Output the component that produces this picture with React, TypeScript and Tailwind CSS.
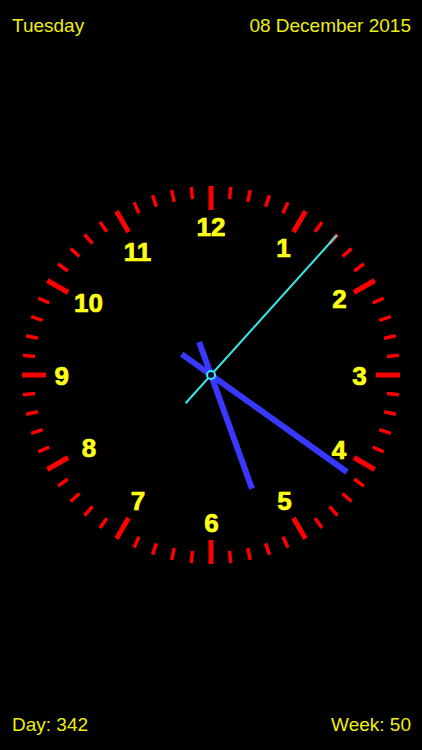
import React from "react";

const CX = 211;
const CY = 211;
const TOP = 164; // page y of svg top

// number centres measured on the page
const NUMBERS: { n: number; x: number; y: number }[] = [
  { n: 12, x: 211, y: 227 },
  { n: 1, x: 283.5, y: 247.5 },
  { n: 2, x: 339.5, y: 299 },
  { n: 3, x: 359.5, y: 376 },
  { n: 4, x: 339, y: 450 },
  { n: 5, x: 284.5, y: 501 },
  { n: 6, x: 211.5, y: 522.5 },
  { n: 7, x: 138, y: 501 },
  { n: 8, x: 89, y: 448 },
  { n: 9, x: 61.7, y: 375.8 },
  { n: 10, x: 88.5, y: 302.5 },
  { n: 11, x: 137.5, y: 251.5 },
];

function pt(angleDeg: number, r: number) {
  const a = (angleDeg * Math.PI) / 180;
  return { x: CX + r * Math.sin(a), y: CY - r * Math.cos(a) };
}

function Hand({ angle, length, tail, width, color }: { angle: number; length: number; tail: number; width: number; color: string }) {
  const tip = pt(angle, length);
  const back = pt(angle + 180, tail);
  return <line x1={back.x} y1={back.y} x2={tip.x} y2={tip.y} stroke={color} strokeWidth={width} />;
}

function Clock() {
  const ticks = Array.from({ length: 60 }, (_, i) => {
    const major = i % 5 === 0;
    const a = pt(i * 6, major ? 165 : 177);
    const b = pt(i * 6, 189);
    return (
      <line
        key={i}
        x1={a.x}
        y1={a.y}
        x2={b.x}
        y2={b.y}
        stroke="#ff0000"
        strokeWidth={major ? 5 : 3.5}
      />
    );
  });

  return (
    <svg width={422} height={422} viewBox="0 0 422 422" className="block">
      {ticks}
      {NUMBERS.map(({ n, x, y }) => (
        <text
          key={n}
          x={x}
          y={y - TOP + 9.3}
          textAnchor="middle"
          fill="#ffff14"
          stroke="#ffff14"
          strokeWidth={0.7}
          fontSize={26}
          fontWeight={700}
          fontFamily="'Liberation Sans', Arial, sans-serif"
        >
          {n}
        </text>
      ))}
      <Hand angle={160.2} length={121} tail={35} width={6} color="#3838ff" />
      <Hand angle={125.5} length={167} tail={36} width={6} color="#3838ff" />
      <Hand angle={42} length={188} tail={38} width={2} color="#3ae8e8" />
      <circle cx={CX} cy={CY} r={4} fill="#0a0a3a" stroke="#3ae8e8" strokeWidth={2} />
    </svg>
  );
}

export default function App() {
  return (
    <div
      className="w-[422px] h-[750px] bg-black flex flex-col text-[#eeee10] text-[19px] leading-[24px]"
      style={{ fontFamily: "'Liberation Sans', Arial, sans-serif" }}
    >
      <div className="flex justify-between pl-[12px] pr-[11px] pt-[14px]">
        <span>Tuesday</span>
        <span>08 December 2015</span>
      </div>
      <div className="mt-[126px]">
        <Clock />
      </div>
      <div className="flex justify-between pl-[12px] pr-[11px] mt-[127px]">
        <span>Day: 342</span>
        <span>Week: 50</span>
      </div>
    </div>
  );
}
